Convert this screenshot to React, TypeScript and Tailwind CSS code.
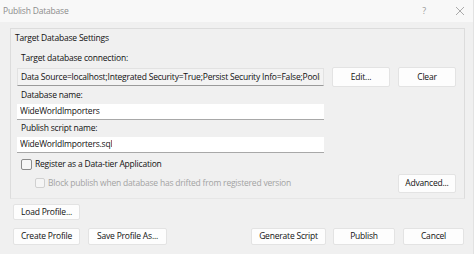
import React from "react";

const font = { fontFamily: '"Open Sans", Lato, "Liberation Sans", sans-serif' };

function Btn({ children, className = "" }: { children: React.ReactNode; className?: string }) {
  return (
    <div
      className={`flex items-center justify-center bg-[#fdfdfd] border border-[#e3e3e3] rounded-[2px] text-[8.5px] tracking-[-0.2px] text-[#111] ${className}`}
    >
      {children}
    </div>
  );
}

function Label({ children }: { children: React.ReactNode }) {
  return <div className="h-[17px] flex items-center pl-[4px] text-[8.5px] tracking-[-0.2px] text-[#111]">{children}</div>;
}

function TextBox({ value, muted = false }: { value: string; muted?: boolean }) {
  return (
    <div
      className={`w-[307px] shrink-0 flex items-center px-[3px] text-[8.5px] tracking-[-0.2px] text-[#111] whitespace-nowrap overflow-hidden border-b border-[#a8a8a8] ${
        muted ? "h-[18px] bg-[#f3f3f3] border border-[#e2e2e2] border-b-[#9a9a9a]" : "h-[16px] bg-white"
      }`}
    >
      <span className="overflow-hidden">{value}</span>
    </div>
  );
}

export default function App() {
  return (
    <div style={font} className="w-[474px] h-[254px] bg-[#f0f0f0] flex flex-col overflow-hidden border-r border-[#e2e2e2]">
      <div className="h-[22px] shrink-0 bg-[#f8f8f8] flex items-center pl-[3px] pr-[8px] text-[8.5px] tracking-[-0.2px] text-[#8c8c8c]">
        <span className="flex-1">Publish Database</span>
        <span className="w-[20px] text-center text-[9px] text-[#9a9a9a]">?</span>
        <svg width="10" height="10" viewBox="0 0 10 10" className="ml-[21px]">
          <path d="M1 1 L9 9 M9 1 L1 9" stroke="#a0a0a0" strokeWidth="0.9" />
        </svg>
      </div>

      <div className="ml-[10px] mt-[6px] w-[455px] h-[171px] shrink-0 border border-[#dcdcdc] border-b-[#e6e6e6] flex flex-col pl-[6px]">
        <div className="h-[18px] flex items-center ml-[-2px] text-[8.5px] tracking-[-0.2px] text-[#111]">Target Database Settings</div>
        <div className="h-[3px]" />
        <Label>Target database connection:</Label>
        <div className="h-[20px] flex items-center">
          <TextBox muted value="Data Source=localhost;Integrated Security=True;Persist Security Info=False;Pooling" />
          <Btn className="ml-[8px] w-[58px] h-[20px]">Edit...</Btn>
          <Btn className="ml-[8px] w-[58px] h-[20px]">Clear</Btn>
        </div>
        <Label>Database name:</Label>
        <TextBox value="WideWorldImporters" />
        <Label>Publish script name:</Label>
        <TextBox value="WideWorldImporters.sql" />
        <div className="h-[18px] mt-[2px] flex items-center pl-[4px] text-[8.5px] tracking-[-0.2px] text-[#111]">
          <div className="w-[11px] h-[11px] rounded-[2px] border border-[#8c8c8c] bg-[#f7f7f7] mr-[3px]" />
          Register as a Data-tier Application
        </div>
        <div className="h-[20px] flex items-center">
          <div className="flex items-center pl-[18px] text-[8.5px] tracking-[-0.2px] text-[#a3a3a3] flex-1">
            <div className="w-[10px] h-[10px] rounded-[2px] border border-[#d0d0d0] bg-[#f5f5f5] mr-[3px]" />
            Block publish when database has drifted from registered version
          </div>
          <Btn className="w-[58px] h-[19px] mr-[8px]">Advanced...</Btn>
        </div>
      </div>

      <div className="ml-[13px] mt-[5px] flex flex-col">
        <Btn className="w-[67px] h-[16px]">Load Profile...</Btn>
        <div className="mt-[8px] flex items-center">
          <Btn className="w-[67px] h-[17px]">Create Profile</Btn>
          <Btn className="ml-[8px] w-[79px] h-[17px]">Save Profile As...</Btn>
          <Btn className="ml-[84px] w-[75px] h-[17px]">Generate Script</Btn>
          <Btn className="ml-[7px] w-[62px] h-[17px]">Publish</Btn>
          <Btn className="ml-[8px] w-[61px] h-[17px]">Cancel</Btn>
        </div>
      </div>
    </div>
  );
}
